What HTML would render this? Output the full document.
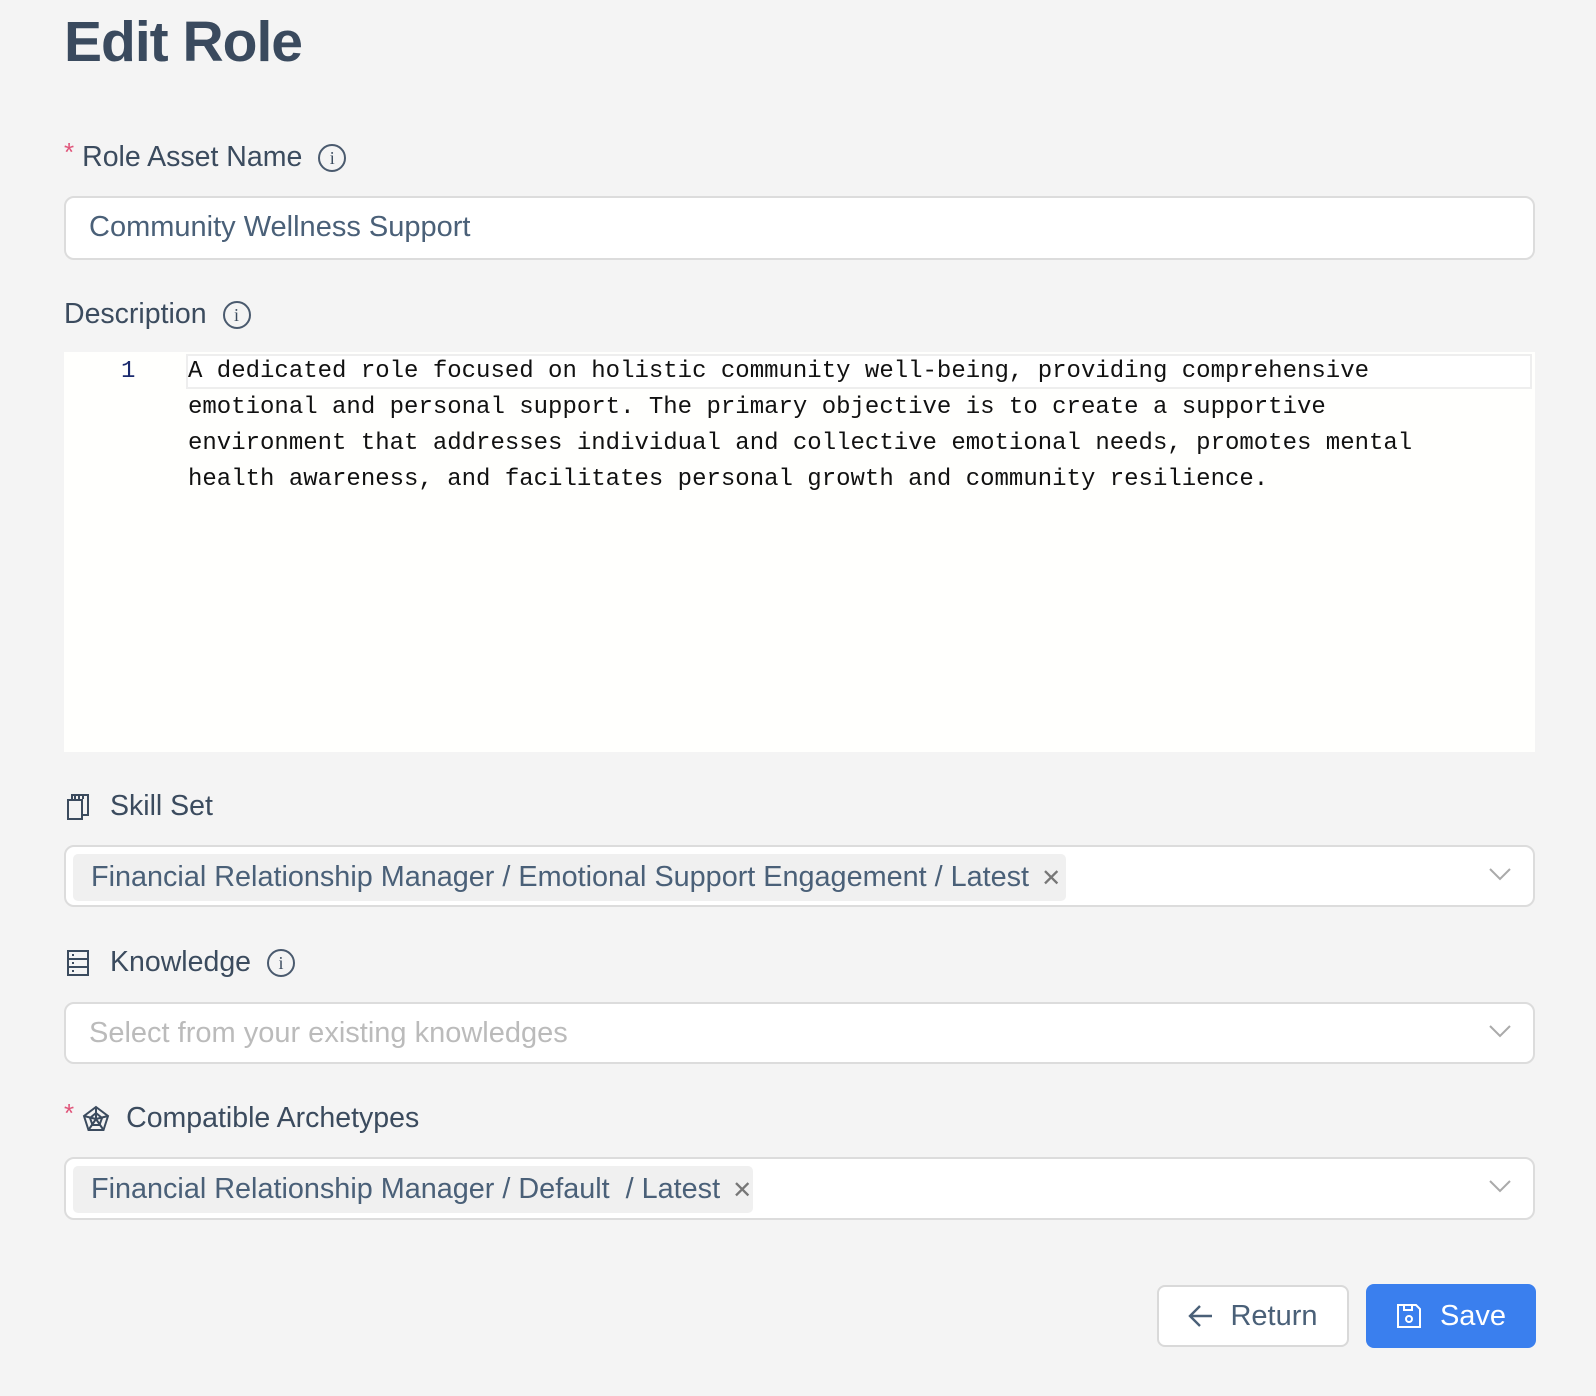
<!DOCTYPE html>
<html><head><meta charset="utf-8"><style>
body{margin:0;background:#f4f4f4;width:1596px;height:1396px;font-family:"Liberation Sans",sans-serif;color:#3b4b5e;position:relative;overflow:hidden}
.a{position:absolute}
h1{position:absolute;left:64px;top:9px;margin:0;font-size:57px;font-weight:bold;color:#3a4a5e;letter-spacing:-1px}
.lbl{position:absolute;font-size:28.5px;color:#3b4b5e;display:flex;align-items:center;white-space:nowrap}
.req{color:#e0557a;font-size:26px;margin-right:8px;position:relative;top:-5px}
.info{display:inline-block;width:28px;height:28px;border:2px solid #4a5a6e;border-radius:50%;box-sizing:border-box;margin-left:16px;font-size:18px;text-align:center;line-height:24px;font-family:"Liberation Serif",serif}
.box{position:absolute;left:64px;width:1471px;background:#fff;border:2px solid #dcdcdc;border-radius:10px;box-sizing:border-box}
.tag{position:absolute;left:7px;top:7px;height:47px;background:#f0f0f0;border-radius:5px;font-size:28.8px;color:#4a6078;line-height:47px;padding-left:18px;white-space:nowrap}
.chev{position:absolute;right:22px;top:20px}
</style></head><body>
<h1>Edit Role</h1>
<div class="lbl" style="left:64px;top:141px"><span class="req">*</span>Role Asset Name<span class="info">i</span></div>
<div class="box" style="top:196px;height:64px"><div class="a" style="left:23px;top:13px;font-size:29px;color:#4a6078">Community Wellness Support</div></div>
<div class="lbl" style="left:64px;top:298px">Description<span class="info">i</span></div>
<div class="a" style="left:64px;top:352px;width:1471px;height:400px;background:#fffffd"></div>
<div class="a" style="left:186px;top:354px;width:1346px;height:35px;background:#fff;border:2px solid #eee;box-sizing:border-box"></div>
<div class="a" style="left:121px;top:358px;font-family:'Liberation Mono',monospace;font-size:24px;color:#1a2a6e">1</div>
<div class="a" style="left:188px;top:354px;font-family:'Liberation Mono',monospace;font-size:24px;line-height:36px;color:#111;white-space:pre">A dedicated role focused on holistic community well-being, providing comprehensive
emotional and personal support. The primary objective is to create a supportive
environment that addresses individual and collective emotional needs, promotes mental
health awareness, and facilitates personal growth and community resilience.</div>
<div class="lbl" style="left:66px;top:790px"><svg width="24" height="28" viewBox="0 0 24 28" fill="none" stroke="#3b4b5e" stroke-width="2"><path d="M2 7h14v19H2z"/><path d="M6 7V2h16v20h-6"/><path d="M9 2v4M13 2v4M17 2v4"/></svg><span style="margin-left:20px">Skill Set</span></div>
<div class="box" style="top:845px;height:62px"><div class="tag" style="width:975px">Financial Relationship Manager / Emotional Support Engagement / Latest <span style="color:#777;font-size:24px;margin-left:4px">✕</span></div>
<svg class="chev" width="22" height="14" viewBox="0 0 22 14" fill="none" stroke="#aaa" stroke-width="2"><path d="M1 2l10 10L21 2"/></svg></div>
<div class="lbl" style="left:66px;top:946px"><svg width="24" height="28" viewBox="0 0 24 28" fill="none" stroke="#3b4b5e" stroke-width="2"><path d="M2 2h20v24H2zM2 10h20M2 18h20"/><path d="M6 6h2M6 14h2M6 22h2"/></svg><span style="margin-left:20px">Knowledge</span><span class="info">i</span></div>
<div class="box" style="top:1002px;height:62px"><div class="a" style="left:23px;top:13px;font-size:29px;color:#bbb">Select from your existing knowledges</div>
<svg class="chev" width="22" height="14" viewBox="0 0 22 14" fill="none" stroke="#aaa" stroke-width="2"><path d="M1 2l10 10L21 2"/></svg></div>
<div class="lbl" style="left:64px;top:1102px"><span class="req">*</span><svg width="28" height="28" viewBox="0 0 28 28" fill="none" stroke="#3b4b5e" stroke-width="2"><path d="M14 2l12 9-4.5 14h-15L2 11z"/><path d="M14 8l6 5-2.5 7h-7L8 13z"/><path d="M14 2v12M26 11l-12 3M21.5 25L14 14M6.5 25L14 14M2 11l12 3"/></svg><span style="margin-left:16px">Compatible Archetypes</span></div>
<div class="box" style="top:1157px;height:63px"><div class="tag" style="width:662px">Financial Relationship Manager / Default &nbsp;/ Latest <span style="color:#777;font-size:24px;margin-left:4px">✕</span></div>
<svg class="chev" width="22" height="14" viewBox="0 0 22 14" fill="none" stroke="#aaa" stroke-width="2"><path d="M1 2l10 10L21 2"/></svg></div>
<div class="a" style="left:1157px;top:1285px;width:192px;height:62px;background:#fff;border:2px solid #d9d9d9;border-radius:8px;box-sizing:border-box;font-size:29px;color:#4a6078;display:flex;align-items:center;justify-content:center"><svg width="26" height="24" viewBox="0 0 26 24" fill="none" stroke="#4a6078" stroke-width="2.4"><path d="M24 12H3M12 2L2 12l10 10"/></svg><span style="margin-left:16px">Return</span></div>
<div class="a" style="left:1366px;top:1284px;width:170px;height:64px;background:#3a7fee;border-radius:8px;font-size:29px;color:#fff;display:flex;align-items:center;justify-content:center"><svg width="26" height="26" viewBox="0 0 26 26" fill="none" stroke="#fff" stroke-width="2"><path d="M2 2h18l4 4v18H2z"/><path d="M8 2v5h8V2"/><circle cx="13" cy="16" r="3"/></svg><span style="margin-left:18px">Save</span></div>
</body></html>
